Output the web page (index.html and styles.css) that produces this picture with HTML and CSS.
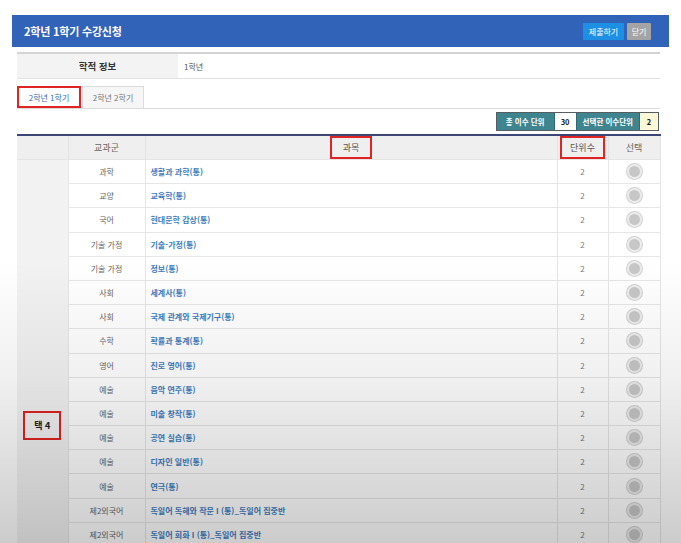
FILE: index.html
```html
<!DOCTYPE html>
<html lang="ko">
<head>
<meta charset="utf-8">
<title>2학년 1학기 수강신청</title>
<link rel="stylesheet" href="styles.css">
</head>
<body>
<div class="page">
  <div class="titlebar">
    <h1 class="title">2학년 1학기 수강신청</h1>
    <div class="actions">
      <button class="btn btn-submit">제출하기</button>
      <button class="btn btn-close">닫기</button>
    </div>
  </div>
  <div class="content">
    <div class="info">
      <div class="info-label">학적 정보</div>
      <div class="info-value">1학년</div>
    </div>
    <div class="tabs">
      <div class="tab tab-active">2학년 1학기</div>
      <div class="tab">2학년 2학기</div>
    </div>
    <div class="stats-row">
      <div class="stats">
        <span class="st-label">총 이수 단위</span>
        <span class="st-val">30</span>
        <span class="st-label">선택한 이수단위</span>
        <span class="st-val st-yellow">2</span>
      </div>
    </div>
    <table class="grid">
      <colgroup>
        <col class="c-group"><col class="c-cat"><col class="c-name"><col class="c-unit"><col class="c-sel">
      </colgroup>
      <thead>
        <tr>
          <th class="th-group"></th>
          <th>교과군</th>
          <th><span class="mark mark-head">과목</span></th>
          <th><span class="mark mark-unit">단위수</span></th>
          <th>선택</th>
        </tr>
      </thead>
      <tbody>
        <tr><td class="group" rowspan="22"><span class="mark mark-group">택 4</span></td><td class="cat">과학</td><td class="name">생활과 과학(통)</td><td class="unit">2</td><td class="sel"><span class="radio"></span></td></tr>
        <tr><td class="cat">교양</td><td class="name">교육학(통)</td><td class="unit">2</td><td class="sel"><span class="radio"></span></td></tr>
        <tr><td class="cat">국어</td><td class="name">현대문학 감상(통)</td><td class="unit">2</td><td class="sel"><span class="radio"></span></td></tr>
        <tr><td class="cat">기술 가정</td><td class="name">기술-가정(통)</td><td class="unit">2</td><td class="sel"><span class="radio"></span></td></tr>
        <tr><td class="cat">기술 가정</td><td class="name">정보(통)</td><td class="unit">2</td><td class="sel"><span class="radio"></span></td></tr>
        <tr><td class="cat">사회</td><td class="name">세계사(통)</td><td class="unit">2</td><td class="sel"><span class="radio"></span></td></tr>
        <tr><td class="cat">사회</td><td class="name">국제 관계와 국제기구(통)</td><td class="unit">2</td><td class="sel"><span class="radio"></span></td></tr>
        <tr><td class="cat">수학</td><td class="name">확률과 통계(통)</td><td class="unit">2</td><td class="sel"><span class="radio"></span></td></tr>
        <tr><td class="cat">영어</td><td class="name">진로 영어(통)</td><td class="unit">2</td><td class="sel"><span class="radio"></span></td></tr>
        <tr><td class="cat">예술</td><td class="name">음악 연주(통)</td><td class="unit">2</td><td class="sel"><span class="radio"></span></td></tr>
        <tr><td class="cat">예술</td><td class="name">미술 창작(통)</td><td class="unit">2</td><td class="sel"><span class="radio"></span></td></tr>
        <tr><td class="cat">예술</td><td class="name">공연 실습(통)</td><td class="unit">2</td><td class="sel"><span class="radio"></span></td></tr>
        <tr><td class="cat">예술</td><td class="name">디자인 일반(통)</td><td class="unit">2</td><td class="sel"><span class="radio"></span></td></tr>
        <tr><td class="cat">예술</td><td class="name">연극(통)</td><td class="unit">2</td><td class="sel"><span class="radio"></span></td></tr>
        <tr><td class="cat">제2외국어</td><td class="name">독일어 독해와 작문 I (통)_독일어 집중반</td><td class="unit">2</td><td class="sel"><span class="radio"></span></td></tr>
        <tr><td class="cat">제2외국어</td><td class="name">독일어 회화 I (통)_독일어 집중반</td><td class="unit">2</td><td class="sel"><span class="radio"></span></td></tr>
        <tr><td class="cat">제2외국어</td><td class="name">일본어 독해와 작문 I (통)_일본어 집중반</td><td class="unit">2</td><td class="sel"><span class="radio"></span></td></tr>
        <tr><td class="cat">제2외국어</td><td class="name">일본어 회화 I (통)_일본어 집중반</td><td class="unit">2</td><td class="sel"><span class="radio"></span></td></tr>
        <tr><td class="cat">제2외국어</td><td class="name">중국어 독해와 작문 I (통)_중국어 집중반</td><td class="unit">2</td><td class="sel"><span class="radio"></span></td></tr>
        <tr><td class="cat">제2외국어</td><td class="name">중국어 회화 I (통)_중국어 집중반</td><td class="unit">2</td><td class="sel"><span class="radio"></span></td></tr>
        <tr><td class="cat">제2외국어</td><td class="name">프랑스어 독해와 작문 I (통)</td><td class="unit">2</td><td class="sel"><span class="radio"></span></td></tr>
        <tr><td class="cat">제2외국어</td><td class="name">프랑스어 회화 I (통)</td><td class="unit">2</td><td class="sel"><span class="radio"></span></td></tr>
      </tbody>
    </table>
  </div>
</div>
<div class="shade"></div>
</body>
</html>
```
FILE: styles.css
```css
html, body {
  margin: 0;
  padding: 0;
  overflow: hidden;
  background: #ffffff;
  font-family: "Noto Sans CJK KR", "Noto Sans", sans-serif;
}

.page {
  padding: 15px 12px 0 12px;
}

.titlebar {
  height: 32px;
  background: #3163b8;
  display: flex;
  align-items: center;
  justify-content: space-between;
  padding: 0 18px 0 12px;
}

.title {
  margin: 0;
  color: #ffffff;
  font-size: 11px;
  font-weight: 700;
  letter-spacing: -0.2px;
}

.actions {
  display: flex;
  gap: 3px;
}

.btn {
  border: none;
  color: #ffffff;
  font-family: inherit;
  font-size: 8px;
  height: 17px;
  padding: 0 5px;
  line-height: 17px;
  border-radius: 1px;
}

.btn-submit {
  background: #1f8fe3;
  width: 41px;
}

.btn-close {
  background: #a4a4a4;
  width: 24px;
  padding: 0;
}

.content {
  padding: 0 9px 0 5px;
}

.info {
  margin-top: 5px;
  height: 24px;
  display: flex;
  border-top: 2px solid #d4d4d4;
  border-bottom: 1px solid #e2e2e2;
  font-size: 9px;
}

.info-label {
  width: 161px;
  background: #f3f3f3;
  display: flex;
  align-items: center;
  justify-content: center;
  font-weight: 700;
  color: #333;
  font-size: 9.5px;
}

.info-value {
  display: flex;
  align-items: center;
  padding-left: 6px;
  color: #555;
  font-size: 8px;
}

.tabs {
  margin-top: 6px;
  display: flex;
  gap: 1px;
  border-bottom: 1px solid #dcdcdc;
  height: 23px;
  align-items: flex-end;
}

.tab {
  display: flex;
  align-items: center;
  justify-content: center;
  font-size: 8px;
  color: #777;
  background: #f6f6f6;
  border: 1px solid #dcdcdc;
  border-bottom: none;
  width: 62px;
  box-sizing: border-box;
  height: 22px;
}

.tab-active {
  background: #ffffff;
  color: #3b6eb3;
  border: 2px solid #e02323;
  width: 64px;
  height: 22px;
}

.stats-row {
  display: flex;
  justify-content: flex-end;
  margin-top: 3px;
  padding-right: 1px;
}

.stats {
  display: flex;
  border: 1px solid #555e60;
  height: 17px;
  font-size: 7.5px;
  font-weight: 700;
}

.st-label {
  background: #3e8590;
  color: #ffffff;
  display: flex;
  align-items: center;
  padding: 0 6px;
  border-right: 1px solid #2f6a73;
}

.st-label:first-child {
  width: 45px;
  justify-content: center;
}

.st-val {
  background: #ffffff;
  color: #222;
  display: flex;
  align-items: center;
  justify-content: center;
  width: 21px;
  border-right: 1px solid #2f6a73;
}

.st-yellow {
  background: #fdf9d8;
  width: 18px;
  border-right: none;
}

.grid {
  margin-top: 3px;
  width: 643px;
  border-collapse: collapse;
  table-layout: fixed;
  border-top: 2px solid #3b4576;
}

.c-group { width: 51px; }
.c-cat { width: 77px; }
.c-name { width: 412px; }
.c-unit { width: 51px; }
.c-sel { width: 52px; }

.grid th {
  background: #efefef;
  height: 21px;
  padding: 0;
  font-size: 9px;
  font-weight: 400;
  color: #666;
  border-left: 1px solid #e4e4e4;
  border-right: 1px solid #e4e4e4;
  border-bottom: 1px solid #e4e4e4;
}

.grid th.th-group {
  border-left: none;
}

.grid td {
  height: 23.2px;
  padding: 0;
  font-size: 8px;
  border: 1px solid #e6e6e6;
  text-align: center;
  color: #666;
}

.grid td.group {
  background: #f2f2f2;
  border-left: none;
  vertical-align: middle;
}

.grid td.name {
  text-align: left;
  padding-left: 5px;
  color: #3d7dc1;
  font-weight: 700;
}

.grid td.unit {
  color: #777;
}

.mark {
  display: inline-block;
  border: 2px solid #e02323;
  box-sizing: border-box;
}

.mark-head {
  width: 42px;
  height: 23px;
  line-height: 20px;
  color: #555;
}

.mark-unit {
  width: 45px;
  height: 23px;
  line-height: 20px;
  color: #555;
}

.mark-group {
  width: 38px;
  height: 29px;
  line-height: 25px;
  font-size: 9px;
  font-weight: 700;
  color: #222;
}

.radio {
  display: inline-block;
  vertical-align: middle;
  width: 11px;
  height: 11px;
  border-radius: 50%;
  background: #c7c7c7;
  border: 2px solid #ececec;
  box-shadow: 0 0 0 1px #d2d2d2;
}

.shade {
  position: fixed;
  left: 0;
  top: 0;
  width: 100%;
  height: 100%;
  pointer-events: none;
  background: linear-gradient(to bottom, rgba(0, 0, 0, 0) 48%, rgba(0, 0, 0, 0.06) 70%, rgba(0, 0, 0, 0.2) 100%);
}
```
